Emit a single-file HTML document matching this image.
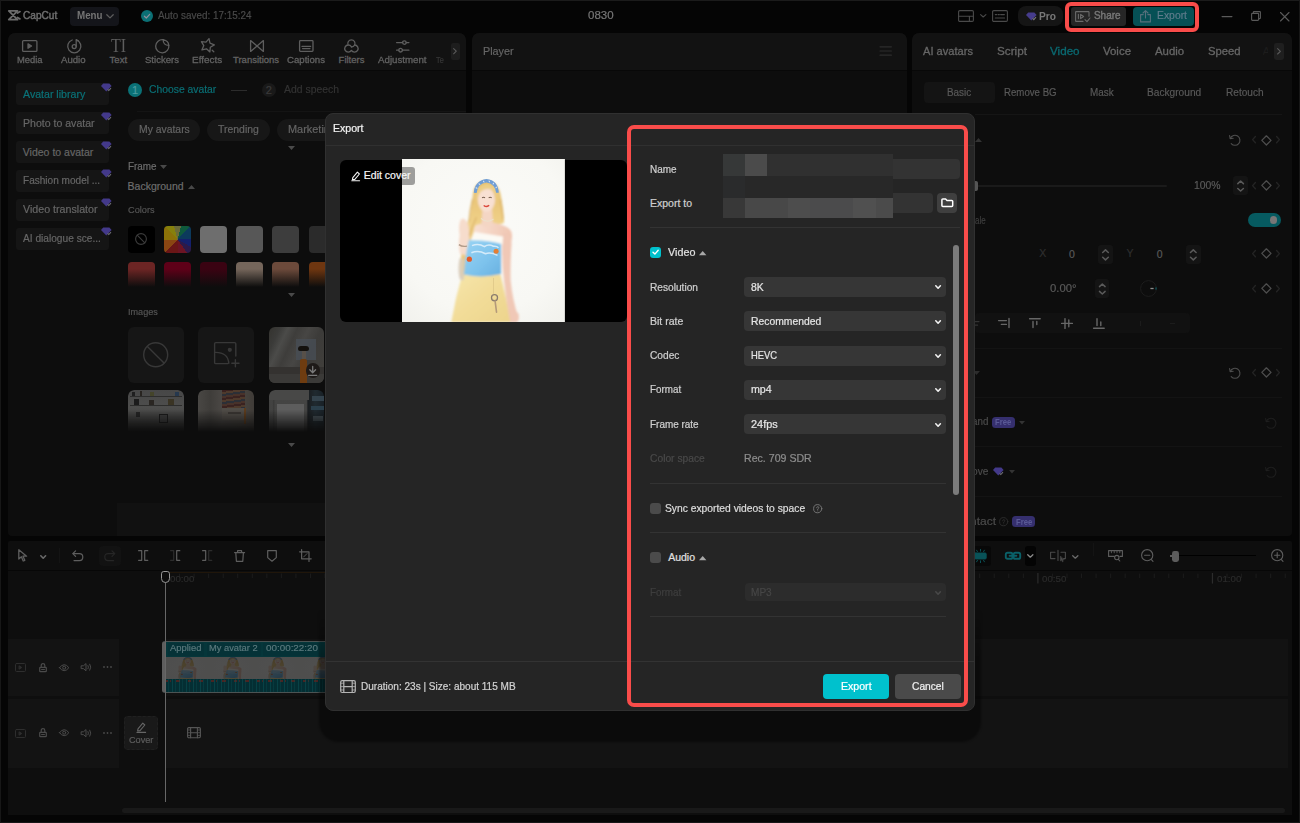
<!DOCTYPE html>
<html lang="en">
<head>
<meta charset="utf-8">
<title>CapCut - Export</title>
<style>
*{box-sizing:border-box;margin:0;padding:0}
html,body{width:1300px;height:823px;overflow:hidden;background:#050505}
body{font-family:"Liberation Sans",sans-serif;font-size:11px;color:#6b6b6b;position:relative}
section{position:absolute;left:0;top:0;width:0;height:0}
.b{position:absolute}
.t{position:absolute;white-space:nowrap;line-height:16px;height:16px;transform-origin:0 50%}
.i{position:absolute;overflow:visible}
.red{position:absolute;border:4px solid #f94c4a}

</style>
</head>
<body>
<!-- title -->
<section id="title">
<div class="b" style="left:0px;top:0px;width:1300px;height:823px;border:1px solid #171717;border-top-color:#1b1b1b;"></div>
<svg class="i" style="left:8px;top:10px;" width="12.5" height="10.5" viewBox="0 0 12.5 10.5" fill="none" stroke="#6c6c6c" stroke-width="1.8" stroke-linecap="round" stroke-linejoin="round"><path d="M0.8 0.8H9.5L0.8 9.7H9.5Z"/><path d="M9.5 3.1L12 1.6M9.5 7.4L12 8.9"/></svg>
<span class="t" style="left:22.8px;top:7px;font-size:10.5px;color:#6d6d6d;transform:scaleX(0.96);-webkit-text-stroke:0.5px #6d6d6d;">CapCut</span>
<div class="b" style="left:70px;top:6.5px;width:49px;height:19.5px;background:#14151a;border-radius:4px;"></div>
<span class="t" style="left:77px;top:8px;font-size:10px;color:#747474;font-weight:700;transform:scaleX(0.977);">Menu</span>
<svg class="i" style="left:105.5px;top:13.5px;" width="8" height="5" viewBox="0 0 8 5" fill="none" stroke="#5c5c5c" stroke-width="1.3" stroke-linecap="round" stroke-linejoin="round"><path d="M0.8 0.8L4 3.9L7.2 0.8"/></svg>
<svg class="i" style="left:141px;top:10px;" width="12" height="12" viewBox="0 0 12 12" fill="none"><circle cx="6" cy="6" r="6" fill="#0b6f74"/><path d="M3.4 6.2L5.3 8L8.7 4.3" stroke="#8f8f9a" stroke-width="1.2" fill="none" stroke-linecap="round" stroke-linejoin="round"/></svg>
<span class="t" style="left:157.5px;top:8px;font-size:10px;color:#4a4a4a;transform:scaleX(0.989);-webkit-text-stroke:0.18px #4a4a4a;">Auto saved: 17:15:24</span>
<span class="t" style="left:588px;top:7px;font-size:10.5px;color:#777777;transform:scaleX(1.096);-webkit-text-stroke:0.18px #777777;">0830</span>
<svg class="i" style="left:958px;top:10px;" width="16" height="12" viewBox="0 0 16 12" fill="none" stroke="#4a4a4a" stroke-width="1.1" stroke-linecap="round" stroke-linejoin="round"><rect x="0.6" y="0.6" width="14.8" height="10.8" rx="1.2"/><path d="M0.6 6.2H15.4M11.4 6.2V11.4"/></svg>
<svg class="i" style="left:980px;top:13.5px;" width="6.5" height="4" viewBox="0 0 6.5 4" fill="none" stroke="#4a4a4a" stroke-width="1.1" stroke-linecap="round" stroke-linejoin="round"><path d="M0.6 0.6L3.2 3L5.9 0.6"/></svg>
<svg class="i" style="left:992px;top:10px;" width="16" height="12" viewBox="0 0 16 12" fill="none" stroke="#4a4a4a" stroke-width="1.1" stroke-linecap="round" stroke-linejoin="round"><rect x="0.6" y="0.6" width="14.8" height="10.8" rx="1.2"/><path d="M3.3 4.6H4.6M6 4.6H7.4M8.6 4.6H12.4M3.3 8H12.6"/></svg>
<div class="b" style="left:1017.5px;top:6px;width:45px;height:20px;background:#151515;border-radius:8px;"></div>
<svg class="i" style="left:1025.5px;top:12px;" width="11" height="9" viewBox="0 0 11 9" fill="none"><path d="M2.2 0.4H8.4L10.6 3L5.3 8.4L0 3Z" fill="#463c8c"/><path d="M6.6 6.4L7.8 7.6L10 5.2" stroke="#777" stroke-width="1.1" fill="none"/></svg>
<span class="t" style="left:1038.5px;top:8px;font-size:10.5px;color:#787878;font-weight:700;transform:scaleX(0.971);">Pro</span>
<div class="b" style="left:1070.5px;top:7px;width:55px;height:18.5px;background:#262626;border-radius:3px;"></div>
<svg class="i" style="left:1075px;top:10.5px;" width="15.5" height="12" viewBox="0 0 15.5 12" fill="none" stroke="#6a6a6a" stroke-width="1.1" stroke-linecap="round" stroke-linejoin="round"><path d="M8 10.4H1.2Q0.6 10.4 0.6 9.8V1.2Q0.6 0.6 1.2 0.6H13.4Q14 0.6 14 1.2V5.2"/><path d="M5.6 3.4L8.6 5.5L5.6 7.6Z"/><path d="M3.4 3.4V7.6"/><path d="M10 8.6L12 10.6L15 7"/></svg>
<span class="t" style="left:1093.5px;top:8px;font-size:10px;color:#767676;transform:scaleX(0.993);-webkit-text-stroke:0.45px #767676;">Share</span>
<div class="b" style="left:1133px;top:6.5px;width:61px;height:19.5px;background:#065055;border-radius:4px;"></div>
<svg class="i" style="left:1140px;top:10px;" width="11" height="12.5" viewBox="0 0 11 12.5" fill="none" stroke="#56707c" stroke-width="1.1" stroke-linecap="round" stroke-linejoin="round"><path d="M3.2 4.6H0.6V11.9H10.4V4.6H7.8"/><path d="M5.5 8V0.8M3 3L5.5 0.6L8 3"/></svg>
<span class="t" style="left:1157px;top:7px;font-size:10.5px;color:#5f7c8c;transform:scaleX(0.988);-webkit-text-stroke:0.18px #5f7c8c;">Export</span>
<svg class="i" style="left:1222px;top:15.5px;" width="10" height="1.2" viewBox="0 0 10 1.2" fill="none" stroke="#5a5a5a" stroke-width="1.1" stroke-linecap="round" stroke-linejoin="round"><path d="M0 0.6H10"/></svg>
<svg class="i" style="left:1251px;top:11px;" width="10" height="10" viewBox="0 0 10 10" fill="none" stroke="#5a5a5a" stroke-width="1.1" stroke-linecap="round" stroke-linejoin="round"><rect x="0.6" y="2.4" width="7" height="7" rx="0.8"/><path d="M2.4 2.2V1.2Q2.4 0.6 3 0.6H8.8Q9.4 0.6 9.4 1.2V7Q9.4 7.6 8.8 7.6H7.8"/></svg>
<svg class="i" style="left:1280px;top:12px;" width="9.5" height="9.5" viewBox="0 0 9.5 9.5" fill="none" stroke="#5a5a5a" stroke-width="1.1" stroke-linecap="round" stroke-linejoin="round"><path d="M0.5 0.5L9 9M9 0.5L0.5 9"/></svg>
</section>
<!-- left -->
<section id="left">
<div class="b" style="left:8px;top:33px;width:458px;height:502.5px;background:#0d0d0d;border-radius:7px 7px 4px 4px;"></div>
<div class="b" style="left:8px;top:33px;width:458px;height:37px;background:#121212;border-radius:7px 7px 0 0;"></div>
<div class="b" style="left:8px;top:70px;width:458px;height:1px;background:#080808;"></div>
<div class="b" style="left:117px;top:503px;width:349px;height:32.5px;background:#111111;border-radius:0 0 4px 0;"></div>
<svg class="i" style="left:22px;top:40px;" width="15.5" height="12" viewBox="0 0 15.5 12" fill="none" stroke="#5e5e5e" stroke-width="1.3" stroke-linecap="round" stroke-linejoin="round"><rect x="0.6" y="0.6" width="14.3" height="10.8" rx="1"/><path d="M6 3.8L9.6 6L6 8.2Z" fill="#5e5e5e"/></svg>
<svg class="i" style="left:66.5px;top:38.8px;" width="14.5" height="14.5" viewBox="0 0 14.5 14.5" fill="none" stroke="#5e5e5e" stroke-width="1.3" stroke-linecap="round" stroke-linejoin="round"><path d="M9.4 1A6.6 6.6 0 1 1 5.2 1"/><circle cx="7.2" cy="7.6" r="2"/><path d="M9.2 7.6V0.7L11.4 1.8"/></svg>
<span class="t" style="left:110.8px;top:38px;font-size:18.5px;color:#5e5e5e;transform:scaleX(0.863);font-family:'Liberation Serif',serif;line-height:16px;">TI</span>
<svg class="i" style="left:155px;top:39px;" width="14.5" height="14.5" viewBox="0 0 14.5 14.5" fill="none" stroke="#5e5e5e" stroke-width="1.3" stroke-linecap="round" stroke-linejoin="round"><path d="M8.2 0.7A6.6 6.6 0 1 0 13.8 6.3"/><path d="M8.2 0.7Q8 6.2 13.8 6.3Q13.6 2 8.2 0.7Z"/></svg>
<svg class="i" style="left:199.5px;top:38.4px;" width="15" height="15" viewBox="0 0 15 15" fill="none" stroke="#5e5e5e" stroke-width="1.3" stroke-linecap="round" stroke-linejoin="round"><path d="M9.0 0.6L10.0 5.2L14.3 6.9L10.3 9.3L9.9 13.9L6.5 10.8L1.9 11.9L3.8 7.6L1.4 3.7L6.0 4.2Z"/><path d="M12.2 12.2L13.8 13.8"/></svg>
<svg class="i" style="left:249.5px;top:40px;" width="14" height="12" viewBox="0 0 14 12" fill="none" stroke="#5e5e5e" stroke-width="1.3" stroke-linecap="round" stroke-linejoin="round"><path d="M0.6 0.6V11.4L13.4 0.6V11.4Z"/></svg>
<svg class="i" style="left:298.8px;top:40px;" width="14.6" height="12" viewBox="0 0 14.6 12" fill="none" stroke="#5e5e5e" stroke-width="1.3" stroke-linecap="round" stroke-linejoin="round"><rect x="0.6" y="0.6" width="13.4" height="10.8" rx="0.8"/><path d="M3 6.4H11.6M3.6 8.6H11" stroke-width="1.3"/></svg>
<svg class="i" style="left:344px;top:38.6px;" width="15" height="14" viewBox="0 0 15 14" fill="none" stroke="#5e5e5e" stroke-width="1.3" stroke-linecap="round" stroke-linejoin="round"><path d="M4.17 6A3.6 3.6 0 1 1 10.63 6A3.6 3.6 0 1 1 7.4 11.43A3.6 3.6 0 1 1 4.17 6A3.6 3.6 0 0 1 7.4 7.77"/><path d="M10.63 6A3.6 3.6 0 0 1 7.4 8"/></svg>
<svg class="i" style="left:395.5px;top:38.5px;" width="13.5" height="14" viewBox="0 0 13.5 14" fill="none" stroke="#5e5e5e" stroke-width="1.3" stroke-linecap="round" stroke-linejoin="round"><path d="M0.6 3.6H6.6M10.2 3.6H12.9M0.6 11.2H2.8M6.4 11.2H12.9"/><circle cx="8.4" cy="3.6" r="1.8"/><circle cx="4.6" cy="11.2" r="1.8"/></svg>
<span class="t" style="left:17px;top:52px;font-size:9.5px;color:#626262;transform:scaleX(0.989);-webkit-text-stroke:0.3px #626262;">Media</span>
<span class="t" style="left:61.4px;top:52px;font-size:9.5px;color:#626262;transform:scaleX(1.012);-webkit-text-stroke:0.3px #626262;">Audio</span>
<span class="t" style="left:109.6px;top:52px;font-size:9.5px;color:#626262;-webkit-text-stroke:0.3px #626262;">Text</span>
<span class="t" style="left:145px;top:52px;font-size:9.5px;color:#626262;transform:scaleX(1.006);-webkit-text-stroke:0.3px #626262;">Stickers</span>
<span class="t" style="left:191.8px;top:52px;font-size:9.5px;color:#626262;transform:scaleX(1.046);-webkit-text-stroke:0.3px #626262;">Effects</span>
<span class="t" style="left:233px;top:52px;font-size:9.5px;color:#626262;-webkit-text-stroke:0.3px #626262;">Transitions</span>
<span class="t" style="left:287.4px;top:52px;font-size:9.5px;color:#626262;transform:scaleX(1.013);-webkit-text-stroke:0.3px #626262;">Captions</span>
<span class="t" style="left:338.6px;top:52px;font-size:9.5px;color:#626262;-webkit-text-stroke:0.3px #626262;">Filters</span>
<span class="t" style="left:377.8px;top:52px;font-size:9.5px;color:#626262;transform:scaleX(1.022);-webkit-text-stroke:0.3px #626262;">Adjustment</span>
<span class="t" style="left:435.8px;top:52px;font-size:9.5px;color:#383838;transform:scaleX(0.766);-webkit-text-stroke:0.18px #383838;">Te</span>
<div class="b" style="left:450.5px;top:43px;width:9.3px;height:16.8px;background:#1d1d1d;border-radius:2px;"></div>
<svg class="i" style="left:453.4px;top:48.4px;" width="4" height="6.4" viewBox="0 0 4 6.4" fill="none" stroke="#5a5a5a" stroke-width="1.1" stroke-linecap="round" stroke-linejoin="round"><path d="M0.6 0.6L3.3 3.2L0.6 5.8"/></svg>
<div class="b" style="left:15.7px;top:83.4px;width:93.6px;height:21.9px;background:#151515;border-radius:3px;"></div>
<span class="t" style="left:22.8px;top:86px;font-size:10.5px;color:#0a747a;transform:scaleX(1.009);-webkit-text-stroke:0.18px #0a747a;">Avatar library</span>
<svg class="i" style="left:100.6px;top:82.8px;" width="11" height="9" viewBox="0 0 11 9" fill="none"><path d="M2.2 0.4H8.4L10.6 3L5.3 8.4L0 3Z" fill="#43398a"/><path d="M6.6 6.3L7.8 7.5L10 5.1" stroke="#6d6d74" stroke-width="1.1" fill="none"/></svg>
<div class="b" style="left:15.7px;top:112.26px;width:93.6px;height:21.9px;background:#151515;border-radius:3px;"></div>
<span class="t" style="left:22.8px;top:115px;font-size:10.5px;color:#676767;transform:scaleX(1.005);-webkit-text-stroke:0.18px #676767;">Photo to avatar</span>
<svg class="i" style="left:100.6px;top:111.66px;" width="11" height="9" viewBox="0 0 11 9" fill="none"><path d="M2.2 0.4H8.4L10.6 3L5.3 8.4L0 3Z" fill="#43398a"/><path d="M6.6 6.3L7.8 7.5L10 5.1" stroke="#6d6d74" stroke-width="1.1" fill="none"/></svg>
<div class="b" style="left:15.7px;top:141.12px;width:93.6px;height:21.9px;background:#151515;border-radius:3px;"></div>
<span class="t" style="left:22.8px;top:144px;font-size:10.5px;color:#676767;-webkit-text-stroke:0.18px #676767;">Video to avatar</span>
<svg class="i" style="left:100.6px;top:140.52px;" width="11" height="9" viewBox="0 0 11 9" fill="none"><path d="M2.2 0.4H8.4L10.6 3L5.3 8.4L0 3Z" fill="#43398a"/><path d="M6.6 6.3L7.8 7.5L10 5.1" stroke="#6d6d74" stroke-width="1.1" fill="none"/></svg>
<div class="b" style="left:15.7px;top:169.98px;width:93.6px;height:21.9px;background:#151515;border-radius:3px;"></div>
<span class="t" style="left:22.8px;top:172px;font-size:10.5px;color:#676767;transform:scaleX(0.958);-webkit-text-stroke:0.18px #676767;">Fashion model ...</span>
<svg class="i" style="left:100.6px;top:169.38px;" width="11" height="9" viewBox="0 0 11 9" fill="none"><path d="M2.2 0.4H8.4L10.6 3L5.3 8.4L0 3Z" fill="#43398a"/><path d="M6.6 6.3L7.8 7.5L10 5.1" stroke="#6d6d74" stroke-width="1.1" fill="none"/></svg>
<div class="b" style="left:15.7px;top:198.84px;width:93.6px;height:21.9px;background:#151515;border-radius:3px;"></div>
<span class="t" style="left:22.8px;top:201px;font-size:10.5px;color:#676767;transform:scaleX(1.016);-webkit-text-stroke:0.18px #676767;">Video translator</span>
<svg class="i" style="left:100.6px;top:198.24px;" width="11" height="9" viewBox="0 0 11 9" fill="none"><path d="M2.2 0.4H8.4L10.6 3L5.3 8.4L0 3Z" fill="#43398a"/><path d="M6.6 6.3L7.8 7.5L10 5.1" stroke="#6d6d74" stroke-width="1.1" fill="none"/></svg>
<div class="b" style="left:15.7px;top:227.7px;width:93.6px;height:21.9px;background:#151515;border-radius:3px;"></div>
<span class="t" style="left:22.8px;top:230px;font-size:10.5px;color:#676767;transform:scaleX(0.967);-webkit-text-stroke:0.18px #676767;">AI dialogue sce...</span>
<svg class="i" style="left:100.6px;top:227.1px;" width="11" height="9" viewBox="0 0 11 9" fill="none"><path d="M2.2 0.4H8.4L10.6 3L5.3 8.4L0 3Z" fill="#43398a"/><path d="M6.6 6.3L7.8 7.5L10 5.1" stroke="#6d6d74" stroke-width="1.1" fill="none"/></svg>
<div class="b" style="left:127.6px;top:82.8px;width:14.6px;height:14.7px;background:#0a7176;border-radius:8px;"></div>
<span class="t" style="left:132px;top:82px;font-size:11px;color:#4c9a9e;-webkit-text-stroke:0.18px #4c9a9e;">1</span>
<span class="t" style="left:149.3px;top:81px;font-size:10.5px;color:#0a7076;transform:scaleX(0.985);-webkit-text-stroke:0.18px #0a7076;">Choose avatar</span>
<div class="b" style="left:231.4px;top:89.6px;width:15.8px;height:1px;background:#2c2c2c;"></div>
<div class="b" style="left:261.6px;top:83px;width:14.4px;height:14.3px;background:#191919;border-radius:8px;"></div>
<span class="t" style="left:265.8px;top:82px;font-size:11px;color:#3a3a3a;-webkit-text-stroke:0.18px #3a3a3a;">2</span>
<span class="t" style="left:283.8px;top:81px;font-size:10.5px;color:#333333;transform:scaleX(0.992);-webkit-text-stroke:0.18px #333333;">Add speech</span>
<div class="b" style="left:137px;top:111px;width:329px;height:1px;background:#141414;"></div>
<div class="b" style="left:127.6px;top:118.5px;width:72.8px;height:22.7px;background:#171717;border-radius:11.4px;"></div>
<span class="t" style="left:138.6px;top:121px;font-size:10.5px;color:#656565;transform:scaleX(0.989);-webkit-text-stroke:0.18px #656565;">My avatars</span>
<div class="b" style="left:207px;top:118.5px;width:63.2px;height:22.7px;background:#171717;border-radius:11.4px;"></div>
<span class="t" style="left:218.4px;top:121px;font-size:10.5px;color:#656565;transform:scaleX(0.994);-webkit-text-stroke:0.18px #656565;">Trending</span>
<div class="b" style="left:277.2px;top:118.5px;width:67.8px;height:22.7px;background:#171717;border-radius:11.4px;"></div>
<span class="t" style="left:288px;top:121px;font-size:10.5px;color:#656565;transform:scaleX(1.041);-webkit-text-stroke:0.18px #656565;">Marketing</span>
<svg class="i" style="left:287.7px;top:145.6px;" width="7" height="4" viewBox="0 0 7 4" fill="none"><polygon points="0,0 7,0 3.5,4" fill="#4a4a4a"/></svg>
<span class="t" style="left:127.6px;top:158px;font-size:10.5px;color:#6e6e6e;transform:scaleX(0.943);-webkit-text-stroke:0.18px #6e6e6e;">Frame</span>
<svg class="i" style="left:160.1px;top:165.4px;" width="7" height="4" viewBox="0 0 7 4" fill="none"><polygon points="0,0 7,0 3.5,4" fill="#484848"/></svg>
<span class="t" style="left:127.6px;top:178px;font-size:10.5px;color:#6e6e6e;-webkit-text-stroke:0.18px #6e6e6e;">Background</span>
<svg class="i" style="left:187.7px;top:184.6px;" width="7" height="4" viewBox="0 0 7 4" fill="none"><polygon points="0,4 3.5,0 7,4" fill="#484848"/></svg>
<span class="t" style="left:127.6px;top:202px;font-size:9.5px;color:#555555;transform:scaleX(0.969);-webkit-text-stroke:0.18px #555555;">Colors</span>
<div class="b" style="left:127.8px;top:225.5px;width:27px;height:27.1px;background:#000000;border-radius:4px;"></div>
<div class="b" style="left:163.95px;top:225.5px;width:27px;height:27.1px;border-radius:4px;background:conic-gradient(from 0deg,#6b6b3a 0 4%,#0f5a3c 4% 12%,#0c3a5c 12% 25%,#14206c 25% 33%,#2c1a4a 33% 40%,#6c1424 40% 50%,#6a1616 50% 62%,#8a4612 62% 75%,#8c7208 75% 88%,#86800c 88% 96%,#6b6b3a 96%);"></div>
<div class="b" style="left:200.1px;top:225.5px;width:27px;height:27.1px;background:#6e6e6e;border-radius:4px;"></div>
<div class="b" style="left:236.25px;top:225.5px;width:27px;height:27.1px;background:#575757;border-radius:4px;"></div>
<div class="b" style="left:272.4px;top:225.5px;width:27px;height:27.1px;background:#3d3d3d;border-radius:4px;"></div>
<div class="b" style="left:308.55px;top:225.5px;width:27px;height:27.1px;background:#2b2b2b;border-radius:4px;"></div>
<svg class="i" style="left:135.4px;top:233px;" width="12" height="12" viewBox="0 0 12 12" fill="none" stroke="#3c3c3c" stroke-width="1.1" stroke-linecap="round" stroke-linejoin="round"><circle cx="6" cy="6" r="5.4"/><path d="M2.2 2.2L9.8 9.8"/></svg>
<div class="b" style="left:127.8px;top:261.8px;width:27px;height:25.2px;border-radius:4px 4px 0 0;background:linear-gradient(to bottom,#6c2524 0,#6c2524 28%,rgba(13,13,13,0) 100%);"></div>
<div class="b" style="left:163.95px;top:261.8px;width:27px;height:25.2px;border-radius:4px 4px 0 0;background:linear-gradient(to bottom,#5e0018 0,#5e0018 28%,rgba(13,13,13,0) 100%);"></div>
<div class="b" style="left:200.1px;top:261.8px;width:27px;height:25.2px;border-radius:4px 4px 0 0;background:linear-gradient(to bottom,#3a0312 0,#3a0312 28%,rgba(13,13,13,0) 100%);"></div>
<div class="b" style="left:236.25px;top:261.8px;width:27px;height:25.2px;border-radius:4px 4px 0 0;background:linear-gradient(to bottom,#75665b 0,#75665b 28%,rgba(13,13,13,0) 100%);"></div>
<div class="b" style="left:272.4px;top:261.8px;width:27px;height:25.2px;border-radius:4px 4px 0 0;background:linear-gradient(to bottom,#6c4a3b 0,#6c4a3b 28%,rgba(13,13,13,0) 100%);"></div>
<div class="b" style="left:308.55px;top:261.8px;width:27px;height:25.2px;border-radius:4px 4px 0 0;background:linear-gradient(to bottom,#6e3610 0,#6e3610 28%,rgba(13,13,13,0) 100%);"></div>
<svg class="i" style="left:287.7px;top:292.8px;" width="7" height="4" viewBox="0 0 7 4" fill="none"><polygon points="0,0 7,0 3.5,4" fill="#4a4a4a"/></svg>
<span class="t" style="left:127.6px;top:304px;font-size:9.5px;color:#555555;transform:scaleX(0.956);-webkit-text-stroke:0.18px #555555;">Images</span>
<div class="b" style="left:127.7px;top:326.8px;width:56.1px;height:55.8px;background:#161616;border-radius:6px;"></div>
<svg class="i" style="left:143px;top:342px;" width="25.4" height="25.4" viewBox="0 0 25.4 25.4" fill="none" stroke="#383838" stroke-width="1.4" stroke-linecap="round" stroke-linejoin="round"><circle cx="12.7" cy="12.7" r="12"/><path d="M4.4 4.4L21 21"/></svg>
<div class="b" style="left:198px;top:326.8px;width:56.4px;height:55.8px;background:#161616;border-radius:6px;"></div>
<svg class="i" style="left:214.4px;top:342.4px;" width="25" height="25" viewBox="0 0 25 25" fill="none" stroke="#383838" stroke-width="1.4" stroke-linecap="round" stroke-linejoin="round"><path d="M21.8 14V1.8Q21.8 0.6 20.6 0.6H1.8Q0.6 0.6 0.6 1.8V20.4Q0.6 21.6 1.8 21.6H14"/><path d="M0.6 10.4Q14 10 14.8 21.4"/><circle cx="15.8" cy="7.8" r="1.4" fill="#383838"/><path d="M21.4 17.6V24.8M17.8 21.2H25"/></svg>
<div class="b" style="left:268.5px;top:326.6px;width:55.8px;height:56.1px;border-radius:6px;filter:blur(.3px);background:linear-gradient(115deg,#34332f 0,#3b3b39 14%,#4b4b49 24%,#3e3d3b 36%,#474644 50%,#3c3b39 66%,#42403c 100%);overflow:hidden;"><div class="b" style="left:27px;top:12px;width:20px;height:21px;background:#474d55;opacity:.8"></div><div class="b" style="left:0;top:40px;width:56px;height:7px;background:#343230"></div><div class="b" style="left:0;top:47px;width:56px;height:10px;background:#3b3a38"></div><div class="b" style="left:31.6px;top:32px;width:7.4px;height:24px;background:#6e3c10;border-radius:2px 2px 0 0"></div><div class="b" style="left:33.4px;top:24px;width:4px;height:8px;background:#575049"></div><div class="b" style="left:29.6px;top:19.4px;width:11.4px;height:5.4px;background:#14110d;border-radius:3px 3px 2px 2px"></div><div class="b" style="left:37px;top:36.6px;width:14.8px;height:14.8px;border-radius:8px;background:#1e1a18"></div></div>
<svg class="i" style="left:308.2px;top:365.8px;" width="9.4" height="10" viewBox="0 0 9.4 10" fill="none" stroke="#7a7a7a" stroke-width="1.3" stroke-linecap="round" stroke-linejoin="round"><path d="M4.7 0.5V6.4M1.8 3.8L4.7 6.8L7.6 3.8M0.6 9.3H8.8"/></svg>
<div class="b" style="left:127.7px;top:389.8px;width:56.1px;height:44.2px;filter:blur(.3px);border-radius:6px 6px 0 0;overflow:hidden;-webkit-mask-image:linear-gradient(to bottom,#000 0,#000 45%,transparent 96%);mask-image:linear-gradient(to bottom,#000 0,#000 45%,transparent 96%);background:linear-gradient(to bottom,#474747 0,#4e4e4d 40%,#3b3b3a 75%,#2c2c2b 100%);"><div class="b" style="left:2px;top:6px;width:52px;height:1px;background:#2d2d2c"></div><div class="b" style="left:2px;top:15px;width:52px;height:1px;background:#2d2d2c"></div><div class="b" style="left:4px;top:2px;width:3px;height:4px;background:#1f1f1f"></div><div class="b" style="left:12px;top:1px;width:2px;height:5px;background:#282420"></div><div class="b" style="left:22px;top:2px;width:4px;height:4px;background:#44442a"></div><div class="b" style="left:47px;top:2px;width:4px;height:4px;background:#26384e"></div><div class="b" style="left:6px;top:9px;width:5px;height:6px;background:#1c1c1c"></div><div class="b" style="left:21px;top:10px;width:5px;height:5px;background:#2a2622"></div><div class="b" style="left:40px;top:9px;width:6px;height:6px;background:#3a3424"></div><div class="b" style="left:31px;top:24px;width:9px;height:9px;border:1px solid #1a1a1a;background:#3c3c3c"></div><div class="b" style="left:8px;top:22px;width:4px;height:5px;background:#242424"></div></div>
<div class="b" style="left:198px;top:389.8px;width:56.4px;height:44.2px;filter:blur(.3px);border-radius:6px 6px 0 0;overflow:hidden;-webkit-mask-image:linear-gradient(to bottom,#000 0,#000 45%,transparent 96%);mask-image:linear-gradient(to bottom,#000 0,#000 45%,transparent 96%);background:linear-gradient(90deg,#494744 0,#3f3d3a 22%,#4a4744 42%,#48443f 78%,#403c38 100%);"><div class="b" style="left:23.6px;top:0;width:23px;height:18px;background:repeating-linear-gradient(172deg,#3a2220 0 2px,#4e3a2c 2px 4px,#2c2f36 4px 6px,#48322a 6px 8px)"></div><div class="b" style="left:24px;top:18px;width:24px;height:12px;background:#504c47"></div><div class="b" style="left:30px;top:22.4px;width:13px;height:2px;background:#3a3632"></div><div class="b" style="left:46px;top:18px;width:1.6px;height:16px;background:#5e3c1c"></div></div>
<div class="b" style="left:268.5px;top:389.8px;width:55.8px;height:44.2px;filter:blur(.3px);border-radius:6px 6px 0 0;overflow:hidden;-webkit-mask-image:linear-gradient(to bottom,#000 0,#000 45%,transparent 96%);mask-image:linear-gradient(to bottom,#000 0,#000 45%,transparent 96%);background:linear-gradient(90deg,#414140 0,#434342 6%,#3a3a39 8%,#444443 12%,#454544 68%,#1a1d20 71%,#202a30 84%,#182026 100%);"><div class="b" style="left:0;top:0;width:40px;height:10px;background:#484847"></div><div class="b" style="left:8.2px;top:14px;width:27.8px;height:31px;background:#5d5d5d"></div><div class="b" style="left:43px;top:6px;width:13px;height:5px;background:#33424c"></div><div class="b" style="left:42px;top:16px;width:14px;height:4px;background:#2a3e4a"></div><div class="b" style="left:44px;top:26px;width:10px;height:5px;background:#404a50"></div></div>
<svg class="i" style="left:287.7px;top:443.2px;" width="7" height="4" viewBox="0 0 7 4" fill="none"><polygon points="0,0 7,0 3.5,4" fill="#4a4a4a"/></svg>
</section>
<!-- mid -->
<section id="mid">
<div class="b" style="left:472px;top:33px;width:434.6px;height:502.5px;background:#0d0d0d;border-radius:7px 7px 4px 4px;"></div>
<div class="b" style="left:472px;top:33px;width:434.6px;height:37px;background:#121212;border-radius:7px 7px 0 0;"></div>
<div class="b" style="left:472px;top:70px;width:434.6px;height:1px;background:#080808;"></div>
<span class="t" style="left:483px;top:43px;font-size:10.5px;color:#666666;transform:scaleX(1.028);-webkit-text-stroke:0.18px #666666;">Player</span>
<svg class="i" style="left:880px;top:46px;" width="11.4" height="10" viewBox="0 0 11.4 10" fill="none" stroke="#2c2c2c" stroke-width="1.2" stroke-linecap="round" stroke-linejoin="round"><path d="M0 0.8H11.4M0 5H11.4M0 9.2H11.4"/></svg>
</section>
<!-- right -->
<section id="right">
<div class="b" style="left:912.4px;top:33px;width:380px;height:502.5px;background:#0d0d0d;border-radius:7px 7px 4px 4px;"></div>
<div class="b" style="left:912.4px;top:33px;width:380px;height:37px;background:#121212;border-radius:7px 7px 0 0;"></div>
<div class="b" style="left:912.4px;top:70px;width:380px;height:1px;background:#080808;"></div>
<span class="t" style="left:923px;top:43px;font-size:11.5px;color:#676767;transform:scaleX(0.966);-webkit-text-stroke:0.3px #676767;">AI avatars</span>
<span class="t" style="left:996.6px;top:43px;font-size:11.5px;color:#676767;transform:scaleX(1.02);-webkit-text-stroke:0.3px #676767;">Script</span>
<span class="t" style="left:1050px;top:43px;font-size:11.5px;color:#0a6a72;transform:scaleX(1.013);-webkit-text-stroke:0.3px #0a6a72;">Video</span>
<span class="t" style="left:1103px;top:43px;font-size:11.5px;color:#676767;transform:scaleX(0.995);-webkit-text-stroke:0.3px #676767;">Voice</span>
<span class="t" style="left:1154.8px;top:43px;font-size:11.5px;color:#676767;transform:scaleX(0.992);-webkit-text-stroke:0.3px #676767;">Audio</span>
<span class="t" style="left:1208px;top:43px;font-size:11.5px;color:#676767;transform:scaleX(0.98);-webkit-text-stroke:0.3px #676767;">Speed</span>
<span class="t" style="left:1262.6px;top:43px;font-size:11.5px;color:#1c1c1c;-webkit-text-stroke:0.18px #1c1c1c;width:5px;overflow:hidden;">A</span>
<div class="b" style="left:1274.4px;top:43px;width:9.4px;height:16.8px;background:#1f1f1f;border-radius:2.4px;"></div>
<svg class="i" style="left:1277.3px;top:48.2px;" width="4" height="6.6" viewBox="0 0 4 6.6" fill="none" stroke="#5a5a5a" stroke-width="1.1" stroke-linecap="round" stroke-linejoin="round"><path d="M0.6 0.6L3.4 3.3L0.6 6"/></svg>
<div class="b" style="left:923.8px;top:82.2px;width:71.4px;height:21.2px;background:#141414;border-radius:4px;"></div>
<span class="t" style="left:947px;top:85px;font-size:10px;color:#595959;transform:scaleX(0.99);-webkit-text-stroke:0.18px #595959;">Basic</span>
<span class="t" style="left:1004.4px;top:85px;font-size:10px;color:#595959;transform:scaleX(0.966);-webkit-text-stroke:0.18px #595959;">Remove BG</span>
<span class="t" style="left:1090.4px;top:85px;font-size:10px;color:#595959;transform:scaleX(0.987);-webkit-text-stroke:0.18px #595959;">Mask</span>
<span class="t" style="left:1146.6px;top:85px;font-size:10px;color:#595959;transform:scaleX(1.015);-webkit-text-stroke:0.18px #595959;">Background</span>
<span class="t" style="left:1226.4px;top:85px;font-size:10px;color:#595959;transform:scaleX(1.009);-webkit-text-stroke:0.18px #595959;">Retouch</span>
<div class="b" style="left:975px;top:114px;width:307px;height:1px;background:#151515;"></div>
<svg class="i" style="left:974.5px;top:137.6px;" width="7" height="4" viewBox="0 0 7 4" fill="none"><polygon points="0,4 3.5,0 7,4" fill="#333333"/></svg>
<svg class="i" style="left:1229.2px;top:134.1px;" width="11.4" height="11.6" viewBox="0 0 11.4 11.6" fill="none" stroke="#4e4e4e" stroke-width="1.1" stroke-linecap="round" stroke-linejoin="round"><path d="M2.2 9.6A5 5 0 1 0 1.4 4.2"/><path d="M0.6 1.6L1.2 4.6L4.2 4.2"/></svg>
<svg class="i" style="left:1252.4px;top:136.3px;" width="4" height="7.2" viewBox="0 0 4 7.2" fill="none" stroke="#242424" stroke-width="1.4" stroke-linecap="round" stroke-linejoin="round"><path d="M3.4 0.5L0.6 3.6L3.4 6.7"/></svg><svg class="i" style="left:1260.6px;top:134.5px;" width="10.8" height="10.8" viewBox="0 0 10.8 10.8" fill="none" stroke="#4e4e4e" stroke-width="1.25" stroke-linecap="round" stroke-linejoin="round"><path d="M5.4 0.8L10 5.4L5.4 10L0.8 5.4Z"/></svg><svg class="i" style="left:1275.6px;top:136.3px;" width="4" height="7.2" viewBox="0 0 4 7.2" fill="none" stroke="#242424" stroke-width="1.4" stroke-linecap="round" stroke-linejoin="round"><path d="M0.6 0.5L3.4 3.6L0.6 6.7"/></svg>
<div class="b" style="left:975px;top:184.6px;width:192.4px;height:2px;background:#1a1a1a;border-radius:1px;"></div>
<div class="b" style="left:972px;top:180.6px;width:6.4px;height:10.8px;background:#555555;border-radius:2px;"></div>
<span class="t" style="left:1194.4px;top:178px;font-size:10px;color:#5a5a5a;transform:scaleX(1.04);-webkit-text-stroke:0.18px #5a5a5a;">100%</span>
<div class="b" style="left:1233.2px;top:175.7px;width:15.2px;height:19.7px;background:#141414;border-radius:3px;"></div><svg class="i" style="left:1233.2px;top:175.7px;" width="15.2" height="19.7" viewBox="0 0 15.2 19.7" fill="none" stroke="#5a5a5a" stroke-width="1.5" stroke-linecap="round" stroke-linejoin="round"><path d="M4.8 7.65L7.6 5.05L10.4 7.65M4.8 12.45L7.6 15.05L10.4 12.45"/></svg>
<svg class="i" style="left:1252.4px;top:182px;" width="4" height="7.2" viewBox="0 0 4 7.2" fill="none" stroke="#242424" stroke-width="1.4" stroke-linecap="round" stroke-linejoin="round"><path d="M3.4 0.5L0.6 3.6L3.4 6.7"/></svg><svg class="i" style="left:1260.6px;top:180.2px;" width="10.8" height="10.8" viewBox="0 0 10.8 10.8" fill="none" stroke="#4e4e4e" stroke-width="1.25" stroke-linecap="round" stroke-linejoin="round"><path d="M5.4 0.8L10 5.4L5.4 10L0.8 5.4Z"/></svg><svg class="i" style="left:1275.6px;top:182px;" width="4" height="7.2" viewBox="0 0 4 7.2" fill="none" stroke="#242424" stroke-width="1.4" stroke-linecap="round" stroke-linejoin="round"><path d="M0.6 0.5L3.4 3.6L0.6 6.7"/></svg>
<span class="t" style="left:975px;top:212px;font-size:10.5px;color:#3e3e3e;transform:scaleX(0.756);-webkit-text-stroke:0.18px #3e3e3e;">ale</span>
<div class="b" style="left:1248.4px;top:212.8px;width:33px;height:14.6px;background:#065a60;border-radius:8px;"></div>
<div class="b" style="left:1270px;top:216.4px;width:7.4px;height:7.4px;background:#777777;border-radius:4px;"></div>
<span class="t" style="left:1039.2px;top:245px;font-size:10.5px;color:#2f2f2f;-webkit-text-stroke:0.18px #2f2f2f;">X</span>
<span class="t" style="left:1069px;top:246px;font-size:10.5px;color:#595959;-webkit-text-stroke:0.18px #595959;">0</span>
<div class="b" style="left:1098px;top:244.9px;width:15px;height:19.3px;background:#141414;border-radius:3px;"></div><svg class="i" style="left:1098px;top:244.9px;" width="15" height="19.3" viewBox="0 0 15 19.3" fill="none" stroke="#5a5a5a" stroke-width="1.5" stroke-linecap="round" stroke-linejoin="round"><path d="M4.7 7.45L7.5 4.85L10.3 7.45M4.7 12.25L7.5 14.85L10.3 12.25"/></svg>
<span class="t" style="left:1126.6px;top:245px;font-size:10.5px;color:#2f2f2f;-webkit-text-stroke:0.18px #2f2f2f;">Y</span>
<span class="t" style="left:1156.8px;top:246px;font-size:10.5px;color:#595959;-webkit-text-stroke:0.18px #595959;">0</span>
<div class="b" style="left:1186.2px;top:244.9px;width:14.6px;height:19.3px;background:#141414;border-radius:3px;"></div><svg class="i" style="left:1186.2px;top:244.9px;" width="14.6" height="19.3" viewBox="0 0 14.6 19.3" fill="none" stroke="#5a5a5a" stroke-width="1.5" stroke-linecap="round" stroke-linejoin="round"><path d="M4.5 7.45L7.3 4.85L10.1 7.45M4.5 12.25L7.3 14.85L10.1 12.25"/></svg>
<svg class="i" style="left:1252.4px;top:250.1px;" width="4" height="7.2" viewBox="0 0 4 7.2" fill="none" stroke="#242424" stroke-width="1.4" stroke-linecap="round" stroke-linejoin="round"><path d="M3.4 0.5L0.6 3.6L3.4 6.7"/></svg><svg class="i" style="left:1260.6px;top:248.3px;" width="10.8" height="10.8" viewBox="0 0 10.8 10.8" fill="none" stroke="#4e4e4e" stroke-width="1.25" stroke-linecap="round" stroke-linejoin="round"><path d="M5.4 0.8L10 5.4L5.4 10L0.8 5.4Z"/></svg><svg class="i" style="left:1275.6px;top:250.1px;" width="4" height="7.2" viewBox="0 0 4 7.2" fill="none" stroke="#242424" stroke-width="1.4" stroke-linecap="round" stroke-linejoin="round"><path d="M0.6 0.5L3.4 3.6L0.6 6.7"/></svg>
<span class="t" style="left:1049.8px;top:280px;font-size:10.5px;color:#595959;transform:scaleX(1.08);-webkit-text-stroke:0.18px #595959;">0.00°</span>
<div class="b" style="left:1094.6px;top:278.9px;width:14.6px;height:19.6px;background:#141414;border-radius:3px;"></div><svg class="i" style="left:1094.6px;top:278.9px;" width="14.6" height="19.6" viewBox="0 0 14.6 19.6" fill="none" stroke="#5a5a5a" stroke-width="1.5" stroke-linecap="round" stroke-linejoin="round"><path d="M4.5 7.6L7.3 5L10.1 7.6M4.5 12.4L7.3 15L10.1 12.4"/></svg>
<svg class="i" style="left:1139.8px;top:280px;" width="17" height="17" viewBox="0 0 17 17" fill="none"><circle cx="8.5" cy="8.5" r="7.9" stroke="#1c1c1c" fill="#0d0d0d"/><path d="M10.4 8.5H13.6" stroke="#8a8a8a" stroke-width="1.3"/><path d="M16 7.4V9.6" stroke="#0a6a72" stroke-width="1"/></svg>
<svg class="i" style="left:1252.4px;top:284.8px;" width="4" height="7.2" viewBox="0 0 4 7.2" fill="none" stroke="#242424" stroke-width="1.4" stroke-linecap="round" stroke-linejoin="round"><path d="M3.4 0.5L0.6 3.6L3.4 6.7"/></svg><svg class="i" style="left:1260.6px;top:283px;" width="10.8" height="10.8" viewBox="0 0 10.8 10.8" fill="none" stroke="#4e4e4e" stroke-width="1.25" stroke-linecap="round" stroke-linejoin="round"><path d="M5.4 0.8L10 5.4L5.4 10L0.8 5.4Z"/></svg><svg class="i" style="left:1275.6px;top:284.8px;" width="4" height="7.2" viewBox="0 0 4 7.2" fill="none" stroke="#242424" stroke-width="1.4" stroke-linecap="round" stroke-linejoin="round"><path d="M0.6 0.5L3.4 3.6L0.6 6.7"/></svg>
<div class="b" style="left:975px;top:313px;width:214.6px;height:19.8px;background:#111111;border-radius:4px;"></div>
<svg class="i" style="left:975px;top:318.6px;" width="6" height="9" viewBox="0 0 6 9" fill="none" stroke="#333" stroke-width="1.2" stroke-linecap="round" stroke-linejoin="round"><path d="M0 2.6H4M0 6.2H2.6"/></svg>
<svg class="i" style="left:998px;top:318.4px;" width="12" height="10" viewBox="0 0 12 10" fill="none" stroke="#676767" stroke-width="1.4" stroke-linecap="round" stroke-linejoin="round"><path d="M0.6 2.6H8.4M3.4 6.4H8.4M11 0.4V9.6"/></svg>
<svg class="i" style="left:1029px;top:318.4px;" width="12" height="10" viewBox="0 0 12 10" fill="none" stroke="#676767" stroke-width="1.4" stroke-linecap="round" stroke-linejoin="round"><path d="M0.6 0.8H11.2M4 3.4V9.6M7.8 3.4V6.6"/></svg>
<svg class="i" style="left:1060.6px;top:318px;" width="12" height="11" viewBox="0 0 12 11" fill="none" stroke="#676767" stroke-width="1.4" stroke-linecap="round" stroke-linejoin="round"><path d="M0.6 5.4H11.4M4 0.6V10.4M7.8 2V8.8"/></svg>
<svg class="i" style="left:1093px;top:318px;" width="12" height="11" viewBox="0 0 12 11" fill="none" stroke="#676767" stroke-width="1.4" stroke-linecap="round" stroke-linejoin="round"><path d="M0.6 10.2H11.2M4 0.8V7.6M7.8 4V7.6"/></svg>
<div class="b" style="left:1140px;top:321px;width:1px;height:5px;background:#1c1c1c;"></div>
<div class="b" style="left:1170px;top:323px;width:5px;height:1px;background:#1c1c1c;"></div>
<div class="b" style="left:975px;top:347.5px;width:307px;height:1px;background:#131313;"></div>
<div class="b" style="left:975px;top:396.7px;width:307px;height:1px;background:#131313;"></div>
<div class="b" style="left:975px;top:445.6px;width:307px;height:1px;background:#131313;"></div>
<div class="b" style="left:975px;top:495.6px;width:307px;height:1px;background:#131313;"></div>
<svg class="i" style="left:972.5px;top:370.6px;" width="7" height="4" viewBox="0 0 7 4" fill="none"><polygon points="0,0 7,0 3.5,4" fill="#2c2c2c"/></svg>
<svg class="i" style="left:1229.2px;top:366.9px;" width="11.4" height="11.6" viewBox="0 0 11.4 11.6" fill="none" stroke="#4e4e4e" stroke-width="1.1" stroke-linecap="round" stroke-linejoin="round"><path d="M2.2 9.6A5 5 0 1 0 1.4 4.2"/><path d="M0.6 1.6L1.2 4.6L4.2 4.2"/></svg>
<svg class="i" style="left:1252.4px;top:369.1px;" width="4" height="7.2" viewBox="0 0 4 7.2" fill="none" stroke="#242424" stroke-width="1.4" stroke-linecap="round" stroke-linejoin="round"><path d="M3.4 0.5L0.6 3.6L3.4 6.7"/></svg><svg class="i" style="left:1260.6px;top:367.3px;" width="10.8" height="10.8" viewBox="0 0 10.8 10.8" fill="none" stroke="#4e4e4e" stroke-width="1.25" stroke-linecap="round" stroke-linejoin="round"><path d="M5.4 0.8L10 5.4L5.4 10L0.8 5.4Z"/></svg><svg class="i" style="left:1275.6px;top:369.1px;" width="4" height="7.2" viewBox="0 0 4 7.2" fill="none" stroke="#242424" stroke-width="1.4" stroke-linecap="round" stroke-linejoin="round"><path d="M0.6 0.5L3.4 3.6L0.6 6.7"/></svg>
<span class="t" style="left:972px;top:413px;font-size:10.5px;color:#4c4c4c;transform:scaleX(0.935);-webkit-text-stroke:0.18px #4c4c4c;">and</span>
<div class="b" style="left:992px;top:416.8px;width:22.8px;height:11px;background:#352f6e;border-radius:3.5px;"></div><span class="t" style="left:995.4px;top:414px;font-size:8.5px;color:#5a5a96;font-weight:700;transform:scaleX(0.902);">Free</span>
<svg class="i" style="left:1018.6px;top:420.8px;" width="6" height="3.6" viewBox="0 0 6 3.6" fill="none"><polygon points="0,0 6,0 3,3.6" fill="#333333"/></svg>
<svg class="i" style="left:1265.2px;top:416.8px;" width="11.4" height="11.6" viewBox="0 0 11.4 11.6" fill="none" stroke="#1e1e1e" stroke-width="1.1" stroke-linecap="round" stroke-linejoin="round"><path d="M2.2 9.6A5 5 0 1 0 1.4 4.2"/><path d="M0.6 1.6L1.2 4.6L4.2 4.2"/></svg>
<span class="t" style="left:972px;top:463px;font-size:10.5px;color:#4c4c4c;transform:scaleX(0.968);-webkit-text-stroke:0.18px #4c4c4c;">ove</span>
<svg class="i" style="left:993.4px;top:467.4px;" width="11" height="9" viewBox="0 0 11 9" fill="none"><path d="M2.2 0.4H8.4L10.6 3L5.3 8.4L0 3Z" fill="#43398a"/><path d="M6.6 6.3L7.8 7.5L10 5.1" stroke="#6d6d74" stroke-width="1.1" fill="none"/></svg>
<svg class="i" style="left:1009px;top:470.2px;" width="6" height="3.6" viewBox="0 0 6 3.6" fill="none"><polygon points="0,0 6,0 3,3.6" fill="#333333"/></svg>
<svg class="i" style="left:1265.2px;top:466.2px;" width="11.4" height="11.6" viewBox="0 0 11.4 11.6" fill="none" stroke="#1e1e1e" stroke-width="1.1" stroke-linecap="round" stroke-linejoin="round"><path d="M2.2 9.6A5 5 0 1 0 1.4 4.2"/><path d="M0.6 1.6L1.2 4.6L4.2 4.2"/></svg>
<span class="t" style="left:970px;top:513px;font-size:10.5px;color:#4c4c4c;transform:scaleX(1.142);-webkit-text-stroke:0.18px #4c4c4c;">ntact</span>
<svg class="i" style="left:999.4px;top:517.2px;" width="9.4" height="9.4" viewBox="0 0 9.4 9.4" fill="none" stroke="#2e2e2e" stroke-width="0.9" stroke-linecap="round" stroke-linejoin="round"><circle cx="4.7" cy="4.7" r="4.1"/><path d="M3.6 3.8Q3.8 2.6 4.8 2.6Q5.9 2.7 5.8 3.8Q5.7 4.5 4.7 5V5.6M4.7 6.8V6.9" stroke-width="0.8"/></svg>
<div class="b" style="left:1012.4px;top:516.4px;width:22.8px;height:11px;background:#352f6e;border-radius:3.5px;"></div><span class="t" style="left:1015.8px;top:514px;font-size:8.5px;color:#5a5a96;font-weight:700;transform:scaleX(0.902);">Free</span>
</section>
<!-- timeline -->
<section id="timeline">
<div class="b" style="left:8px;top:540.6px;width:1284px;height:274.2px;background:#0e0e0e;border-radius:2px 2px 0 0;"></div>
<div class="b" style="left:8px;top:540.6px;width:1284px;height:29px;background:#0e0e0e;border-radius:2px 2px 0 0;"></div>
<div class="b" style="left:8px;top:569.6px;width:1284px;height:0.8px;background:#070707;"></div>
<svg class="i" style="left:17.6px;top:549.2px;" width="9.6" height="13" viewBox="0 0 9.6 13" fill="none" stroke="#5e5e5e" stroke-width="1.3" stroke-linecap="round" stroke-linejoin="round"><path d="M0.8 0.8V10L3.4 7.8L5.2 12L6.8 11.3L5 7.2H8.6Z"/></svg>
<svg class="i" style="left:40.2px;top:554.8px;" width="6.4" height="4.2" viewBox="0 0 6.4 4.2" fill="none" stroke="#6a6a6a" stroke-width="1.6" stroke-linecap="round" stroke-linejoin="round"><path d="M0.8 0.8L3.2 3.2L5.6 0.8"/></svg>
<div class="b" style="left:58.6px;top:548px;width:1px;height:15.4px;background:#141414;"></div>
<svg class="i" style="left:71.6px;top:549.8px;" width="11.6" height="11.6" viewBox="0 0 11.6 11.6" fill="none" stroke="#5e5e5e" stroke-width="1.2" stroke-linecap="round" stroke-linejoin="round"><path d="M3.6 0.8L0.8 3.6L3.6 6.4"/><path d="M1.2 3.6H7.4Q10.8 3.6 10.8 7Q10.8 10.6 7.4 10.6H2"/></svg>
<div class="b" style="left:99.4px;top:545.6px;width:21.2px;height:20.4px;background:#121212;border-radius:4px;"></div>
<svg class="i" style="left:104.2px;top:549.8px;" width="11.6" height="11.6" viewBox="0 0 11.6 11.6" fill="none" stroke="#262626" stroke-width="1.2" stroke-linecap="round" stroke-linejoin="round"><path d="M8 0.8L10.8 3.6L8 6.4"/><path d="M10.4 3.6H4.2Q0.8 3.6 0.8 7Q0.8 10.6 4.2 10.6H9.6"/></svg>
<svg class="i" style="left:137.6px;top:550.4px;" width="10.4" height="11" viewBox="0 0 10.4 11" fill="none" stroke="#5e5e5e" stroke-width="1.2" stroke-linecap="round" stroke-linejoin="round"><path d="M0.6 0.7H3.7V10.3H0.6M9.8 0.7H6.7V10.3H9.8"/></svg>
<svg class="i" style="left:170px;top:550.4px;" width="10.4" height="11" viewBox="0 0 10.4 11" fill="none" stroke="#5e5e5e" stroke-width="1.2" stroke-linecap="round" stroke-linejoin="round"><path d="M0.6 0.7H3.7V10.3H0.6" stroke="#2c2c2c"/><path d="M9.8 0.7H6.7V10.3H9.8"/></svg>
<svg class="i" style="left:201.8px;top:550.4px;" width="10.4" height="11" viewBox="0 0 10.4 11" fill="none" stroke="#5e5e5e" stroke-width="1.2" stroke-linecap="round" stroke-linejoin="round"><path d="M0.6 0.7H3.7V10.3H0.6"/><path d="M9.8 0.7H6.7V10.3H9.8" stroke="#2c2c2c"/></svg>
<svg class="i" style="left:234.4px;top:549.8px;" width="11.2" height="12" viewBox="0 0 11.2 12" fill="none" stroke="#5e5e5e" stroke-width="1.2" stroke-linecap="round" stroke-linejoin="round"><path d="M0.6 2.6H10.6M3.6 2.4V0.7H7.6V2.4M1.8 2.8L2.4 11.3H8.8L9.4 2.8"/></svg>
<svg class="i" style="left:267.4px;top:549.8px;" width="10" height="12" viewBox="0 0 10 12" fill="none" stroke="#5e5e5e" stroke-width="1.2" stroke-linecap="round" stroke-linejoin="round"><path d="M0.7 0.7H9.3V7.6L5 11.2L0.7 7.6Z"/></svg>
<svg class="i" style="left:299px;top:549.4px;" width="12.8" height="13" viewBox="0 0 12.8 13" fill="none" stroke="#5e5e5e" stroke-width="1.2" stroke-linecap="round" stroke-linejoin="round"><path d="M2.6 0.6V9.8H12.2M0.6 2.8H10V12.4"/><path d="M4.6 8L8 4.6" stroke-width="0.9"/></svg>
<div class="b" style="left:972px;top:545.7px;width:19px;height:20.3px;background:#080808;border-radius:3px;"></div>
<svg class="i" style="left:974px;top:548.8px;" width="13" height="14" viewBox="0 0 13 14" fill="none" stroke="#0a5a60" stroke-width="0.9" stroke-linecap="round" stroke-linejoin="round"><rect x="0.8" y="4" width="11.4" height="6" rx="1" fill="#095258" stroke="#095258"/><path d="M6.5 0.4V2.2M2.6 1.2L3.4 2.6M10.4 1.2L9.6 2.6M6.5 13.6V11.8M2.6 12.8L3.4 11.4M10.4 12.8L9.6 11.4"/></svg>
<svg class="i" style="left:1005px;top:552.2px;" width="16" height="7.6" viewBox="0 0 16 7.6" fill="none" stroke="#0a6068" stroke-width="1.9" stroke-linecap="round" stroke-linejoin="round"><rect x="0.8" y="0.8" width="6.6" height="6" rx="1.6"/><rect x="8.6" y="0.8" width="6.6" height="6" rx="1.6"/><path d="M4.6 3.8H11.4"/></svg>
<div class="b" style="left:1024.8px;top:545.7px;width:11px;height:20.3px;background:#040404;border-radius:3px;"></div>
<svg class="i" style="left:1027.2px;top:554.4px;" width="6.6" height="4.2" viewBox="0 0 6.6 4.2" fill="none" stroke="#8a8a8a" stroke-width="1.3" stroke-linecap="round" stroke-linejoin="round"><path d="M0.7 0.7L3.3 3.2L5.9 0.7"/></svg>
<svg class="i" style="left:1050px;top:550.4px;" width="16.4" height="12.4" viewBox="0 0 16.4 12.4" fill="none" stroke="#4a4a4a" stroke-width="1.1" stroke-linecap="round" stroke-linejoin="round"><path d="M5 2.2H0.6V8.6H5M11 2.2H15.4V8.6H13.6M8 0.4V10.4"/><path d="M10.4 6.4V11L11.6 10L12.4 11.8L13.2 11.4L12.4 9.8H13.8Z" fill="#4a4a4a" stroke-width="0.6"/></svg>
<svg class="i" style="left:1072.4px;top:554.6px;" width="6.6" height="4.2" viewBox="0 0 6.6 4.2" fill="none" stroke="#6a6a6a" stroke-width="1.3" stroke-linecap="round" stroke-linejoin="round"><path d="M0.7 0.7L3.3 3.2L5.9 0.7"/></svg>
<div class="b" style="left:1093px;top:543.4px;width:1px;height:13px;background:#141414;"></div>
<svg class="i" style="left:1107.6px;top:550.2px;" width="15" height="11.6" viewBox="0 0 15 11.6" fill="none" stroke="#5e5e5e" stroke-width="1.1" stroke-linecap="round" stroke-linejoin="round"><path d="M0.6 0.6H14.4V6.4H12M0.6 0.6V6.4H6"/><path d="M3.4 0.8V2.8M6.2 0.8V2.8M9 0.8V2.8M11.8 0.8V2.8" stroke-width="0.9"/><circle cx="8.8" cy="7.6" r="2.2"/><path d="M10.4 9.4L11.8 11"/></svg>
<svg class="i" style="left:1141px;top:549.4px;" width="14" height="14" viewBox="0 0 14 14" fill="none" stroke="#5e5e5e" stroke-width="1.1" stroke-linecap="round" stroke-linejoin="round"><circle cx="6.2" cy="6.2" r="5.6"/><path d="M3.6 6.2H8.8M10.4 10.6L12 12.4"/></svg>
<div class="b" style="left:1178px;top:555px;width:77.6px;height:1.4px;background:#000000;"></div>
<div class="b" style="left:1171.6px;top:550.6px;width:7.4px;height:11px;background:#5c5c5c;border-radius:2.4px;"></div>
<div class="b" style="left:1169.6px;top:554.6px;width:2.4px;height:2.2px;background:#5c5c5c;"></div>
<svg class="i" style="left:1270.8px;top:549.4px;" width="14" height="14" viewBox="0 0 14 14" fill="none" stroke="#5e5e5e" stroke-width="1.1" stroke-linecap="round" stroke-linejoin="round"><circle cx="6.2" cy="6.2" r="5.6"/><path d="M3.6 6.2H8.8M6.2 3.6V8.8M10.4 10.6L12 12.4"/></svg>
<div class="b" style="left:165px;top:571.6px;width:396px;height:0.8px;background:#20160a;"></div>
<svg class="i" style="left:0px;top:570px;" width="1292" height="16" viewBox="0 0 1292 16" fill="none"><path d="M179.55 3.6V8" stroke="#1c1c1c"/><path d="M194.1 3.6V8" stroke="#1c1c1c"/><path d="M208.64 3.6V8" stroke="#1c1c1c"/><path d="M223.19 3.6V8" stroke="#1c1c1c"/><path d="M237.74 3.6V8" stroke="#1c1c1c"/><path d="M252.29 3.6V8" stroke="#1c1c1c"/><path d="M266.84 3.6V8" stroke="#1c1c1c"/><path d="M281.38 3.6V8" stroke="#1c1c1c"/><path d="M295.93 3.6V8" stroke="#1c1c1c"/><path d="M310.48 3.6V8" stroke="#1c1c1c"/><path d="M325.03 3.6V8" stroke="#1c1c1c"/><path d="M339.58 3V13.6" stroke="#2c2c2c" stroke-width="1.2"/><path d="M354.12 3.6V8" stroke="#1c1c1c"/><path d="M368.67 3.6V8" stroke="#1c1c1c"/><path d="M383.22 3.6V8" stroke="#1c1c1c"/><path d="M397.77 3.6V8" stroke="#1c1c1c"/><path d="M412.32 3.6V8" stroke="#1c1c1c"/><path d="M426.86 3.6V8" stroke="#1c1c1c"/><path d="M441.41 3.6V8" stroke="#1c1c1c"/><path d="M455.96 3.6V8" stroke="#1c1c1c"/><path d="M470.51 3.6V8" stroke="#1c1c1c"/><path d="M485.06 3.6V8" stroke="#1c1c1c"/><path d="M499.6 3.6V8" stroke="#1c1c1c"/><path d="M514.15 3V13.6" stroke="#2c2c2c" stroke-width="1.2"/><path d="M528.7 3.6V8" stroke="#1c1c1c"/><path d="M543.25 3.6V8" stroke="#1c1c1c"/><path d="M557.8 3.6V8" stroke="#1c1c1c"/><path d="M572.34 3.6V8" stroke="#1c1c1c"/><path d="M586.89 3.6V8" stroke="#1c1c1c"/><path d="M601.44 3.6V8" stroke="#1c1c1c"/><path d="M615.99 3.6V8" stroke="#1c1c1c"/><path d="M630.54 3.6V8" stroke="#1c1c1c"/><path d="M645.08 3.6V8" stroke="#1c1c1c"/><path d="M659.63 3.6V8" stroke="#1c1c1c"/><path d="M674.18 3.6V8" stroke="#1c1c1c"/><path d="M688.73 3V13.6" stroke="#2c2c2c" stroke-width="1.2"/><path d="M703.28 3.6V8" stroke="#1c1c1c"/><path d="M717.82 3.6V8" stroke="#1c1c1c"/><path d="M732.37 3.6V8" stroke="#1c1c1c"/><path d="M746.92 3.6V8" stroke="#1c1c1c"/><path d="M761.47 3.6V8" stroke="#1c1c1c"/><path d="M776.02 3.6V8" stroke="#1c1c1c"/><path d="M790.56 3.6V8" stroke="#1c1c1c"/><path d="M805.11 3.6V8" stroke="#1c1c1c"/><path d="M819.66 3.6V8" stroke="#1c1c1c"/><path d="M834.21 3.6V8" stroke="#1c1c1c"/><path d="M848.76 3.6V8" stroke="#1c1c1c"/><path d="M863.3 3V13.6" stroke="#2c2c2c" stroke-width="1.2"/><path d="M877.85 3.6V8" stroke="#1c1c1c"/><path d="M892.4 3.6V8" stroke="#1c1c1c"/><path d="M906.95 3.6V8" stroke="#1c1c1c"/><path d="M921.5 3.6V8" stroke="#1c1c1c"/><path d="M936.04 3.6V8" stroke="#1c1c1c"/><path d="M950.59 3.6V8" stroke="#1c1c1c"/><path d="M965.14 3.6V8" stroke="#1c1c1c"/><path d="M979.69 3.6V8" stroke="#1c1c1c"/><path d="M994.24 3.6V8" stroke="#1c1c1c"/><path d="M1008.78 3.6V8" stroke="#1c1c1c"/><path d="M1023.33 3.6V8" stroke="#1c1c1c"/><path d="M1037.88 3V13.6" stroke="#2c2c2c" stroke-width="1.2"/><path d="M1052.43 3.6V8" stroke="#1c1c1c"/><path d="M1066.98 3.6V8" stroke="#1c1c1c"/><path d="M1081.52 3.6V8" stroke="#1c1c1c"/><path d="M1096.07 3.6V8" stroke="#1c1c1c"/><path d="M1110.62 3.6V8" stroke="#1c1c1c"/><path d="M1125.17 3.6V8" stroke="#1c1c1c"/><path d="M1139.72 3.6V8" stroke="#1c1c1c"/><path d="M1154.26 3.6V8" stroke="#1c1c1c"/><path d="M1168.81 3.6V8" stroke="#1c1c1c"/><path d="M1183.36 3.6V8" stroke="#1c1c1c"/><path d="M1197.91 3.6V8" stroke="#1c1c1c"/><path d="M1212.46 3V13.6" stroke="#2c2c2c" stroke-width="1.2"/><path d="M1227 3.6V8" stroke="#1c1c1c"/><path d="M1241.55 3.6V8" stroke="#1c1c1c"/><path d="M1256.1 3.6V8" stroke="#1c1c1c"/><path d="M1270.65 3.6V8" stroke="#1c1c1c"/><path d="M1285.2 3.6V8" stroke="#1c1c1c"/></svg>
<span class="t" style="left:169.6px;top:571px;font-size:9.5px;color:#2b2b2b;transform:scaleX(1.026);-webkit-text-stroke:0.18px #2b2b2b;">00:00</span>
<span class="t" style="left:1042.48px;top:571px;font-size:9.5px;color:#2b2b2b;transform:scaleX(1.026);-webkit-text-stroke:0.18px #2b2b2b;">00:50</span>
<span class="t" style="left:1217.06px;top:571px;font-size:9.5px;color:#2b2b2b;transform:scaleX(1.026);-webkit-text-stroke:0.18px #2b2b2b;">01:00</span>
<div class="b" style="left:8px;top:639.4px;width:111.4px;height:56.6px;background:#131313;"></div>
<div class="b" style="left:165.6px;top:639.4px;width:1122.4px;height:56.6px;background:#121212;"></div>
<div class="b" style="left:8px;top:699.4px;width:111.4px;height:68.6px;background:#131313;"></div>
<div class="b" style="left:165.6px;top:698.6px;width:1122.4px;height:69.4px;background:#131313;"></div>
<svg class="i" style="left:15.2px;top:662.9px;" width="11" height="9" viewBox="0 0 11 9" fill="none" stroke="#2e2e2e" stroke-width="1" stroke-linecap="round" stroke-linejoin="round"><rect x="0.5" y="0.5" width="10" height="8" rx="1"/><path d="M4.4 3L6.8 4.5L4.4 6Z" fill="#2e2e2e"/></svg><svg class="i" style="left:38.6px;top:662.7px;" width="8" height="9.4" viewBox="0 0 8 9.4" fill="none" stroke="#4a4a4a" stroke-width="1.2" stroke-linecap="round" stroke-linejoin="round"><rect x="0.7" y="4.3" width="6.6" height="4.4" rx="0.8"/><path d="M2.2 4.2V2.6Q2.2 0.7 4 0.7Q5.8 0.7 5.8 2.6V4.2M2.6 6.5H5.4"/></svg><svg class="i" style="left:59px;top:663.7px;" width="10.4" height="7.4" viewBox="0 0 10.4 7.4" fill="none" stroke="#4a4a4a" stroke-width="1" stroke-linecap="round" stroke-linejoin="round"><path d="M0.5 3.7Q5.2 -2.4 9.9 3.7Q5.2 9.8 0.5 3.7Z"/><circle cx="5.2" cy="3.7" r="1.5"/></svg><svg class="i" style="left:80.6px;top:663.3px;" width="11" height="8.4" viewBox="0 0 11 8.4" fill="none" stroke="#4a4a4a" stroke-width="1" stroke-linecap="round" stroke-linejoin="round"><path d="M0.5 2.8H2.4L5 0.6V7.8L2.4 5.6H0.5Z"/><path d="M7 2.6Q8 4.2 7 5.8M8.8 1.2Q10.8 4.2 8.8 7.2"/></svg><svg class="i" style="left:103px;top:666.4px;" width="9" height="2" viewBox="0 0 9 2" fill="none"><circle cx="1" cy="1" r="0.9" fill="#4a4a4a"/><circle cx="4.5" cy="1" r="0.9" fill="#4a4a4a"/><circle cx="8" cy="1" r="0.9" fill="#4a4a4a"/></svg>
<svg class="i" style="left:15.2px;top:728.5px;" width="11" height="9" viewBox="0 0 11 9" fill="none" stroke="#2e2e2e" stroke-width="1" stroke-linecap="round" stroke-linejoin="round"><rect x="0.5" y="0.5" width="10" height="8" rx="1"/><path d="M4.4 3L6.8 4.5L4.4 6Z" fill="#2e2e2e"/></svg><svg class="i" style="left:38.6px;top:728.3px;" width="8" height="9.4" viewBox="0 0 8 9.4" fill="none" stroke="#4a4a4a" stroke-width="1.2" stroke-linecap="round" stroke-linejoin="round"><rect x="0.7" y="4.3" width="6.6" height="4.4" rx="0.8"/><path d="M2.2 4.2V2.6Q2.2 0.7 4 0.7Q5.8 0.7 5.8 2.6V4.2M2.6 6.5H5.4"/></svg><svg class="i" style="left:59px;top:729.3px;" width="10.4" height="7.4" viewBox="0 0 10.4 7.4" fill="none" stroke="#4a4a4a" stroke-width="1" stroke-linecap="round" stroke-linejoin="round"><path d="M0.5 3.7Q5.2 -2.4 9.9 3.7Q5.2 9.8 0.5 3.7Z"/><circle cx="5.2" cy="3.7" r="1.5"/></svg><svg class="i" style="left:80.6px;top:728.9px;" width="11" height="8.4" viewBox="0 0 11 8.4" fill="none" stroke="#4a4a4a" stroke-width="1" stroke-linecap="round" stroke-linejoin="round"><path d="M0.5 2.8H2.4L5 0.6V7.8L2.4 5.6H0.5Z"/><path d="M7 2.6Q8 4.2 7 5.8M8.8 1.2Q10.8 4.2 8.8 7.2"/></svg><svg class="i" style="left:103px;top:732px;" width="9" height="2" viewBox="0 0 9 2" fill="none"><circle cx="1" cy="1" r="0.9" fill="#4a4a4a"/><circle cx="4.5" cy="1" r="0.9" fill="#4a4a4a"/><circle cx="8" cy="1" r="0.9" fill="#4a4a4a"/></svg>
<div class="b" style="left:162.4px;top:641.2px;width:400px;height:51.9px;background:#05363a;border-radius:3px;overflow:hidden;border:1px solid #4c5353;border-left:3.2px solid #5e5e5e;"><div class="b" style="left:0px;top:0px;width:400px;height:14.6px;background:#05363a;"></div><div class="b" style="left:2.4px;top:1px;width:36.6px;height:12.6px;background:#053237;border-radius:2px;"></div><span class="t" style="left:5px;top:-2.3px;font-size:9.5px;color:#5a797d;transform:scaleX(0.99);-webkit-text-stroke:0.18px #5a797d;">Applied</span><div class="b" style="left:41.4px;top:1px;width:53.8px;height:12.6px;background:#053237;border-radius:2px;"></div><span class="t" style="left:44px;top:-2.3px;font-size:9.5px;color:#5a797d;transform:scaleX(0.979);-webkit-text-stroke:0.18px #5a797d;">My avatar 2</span><div class="b" style="left:97.6px;top:1px;width:57.2px;height:12.6px;background:#053237;border-radius:2px;"></div><span class="t" style="left:100.2px;top:-2.3px;font-size:9.5px;color:#5a797d;transform:scaleX(1.036);-webkit-text-stroke:0.18px #5a797d;">00:00:22:20</span><div class="b" style="left:0px;top:14.6px;width:400px;height:22.2px;background:#0a0a0a;overflow:hidden;"><div class="b" style="left:0;top:0;width:400px;height:23px;opacity:.285"><svg class="i" style="left:-0.4px;top:-0.2px;overflow:hidden" width="45.6" height="22.6" viewBox="18 20 132 104" preserveAspectRatio="none"><use href="#avfig"/></svg><svg class="i" style="left:44.7px;top:-0.2px;overflow:hidden" width="45.6" height="22.6" viewBox="18 20 132 104" preserveAspectRatio="none"><use href="#avfig"/></svg><svg class="i" style="left:89.8px;top:-0.2px;overflow:hidden" width="45.6" height="22.6" viewBox="18 20 132 104" preserveAspectRatio="none"><use href="#avfig"/></svg><svg class="i" style="left:134.9px;top:-0.2px;overflow:hidden" width="45.6" height="22.6" viewBox="18 20 132 104" preserveAspectRatio="none"><use href="#avfig"/></svg><svg class="i" style="left:180px;top:-0.2px;overflow:hidden" width="45.6" height="22.6" viewBox="18 20 132 104" preserveAspectRatio="none"><use href="#avfig"/></svg><svg class="i" style="left:225.1px;top:-0.2px;overflow:hidden" width="45.6" height="22.6" viewBox="18 20 132 104" preserveAspectRatio="none"><use href="#avfig"/></svg><svg class="i" style="left:270.2px;top:-0.2px;overflow:hidden" width="45.6" height="22.6" viewBox="18 20 132 104" preserveAspectRatio="none"><use href="#avfig"/></svg><svg class="i" style="left:315.3px;top:-0.2px;overflow:hidden" width="45.6" height="22.6" viewBox="18 20 132 104" preserveAspectRatio="none"><use href="#avfig"/></svg><svg class="i" style="left:360.4px;top:-0.2px;overflow:hidden" width="45.6" height="22.6" viewBox="18 20 132 104" preserveAspectRatio="none"><use href="#avfig"/></svg></div></div><div class="b" style="left:0px;top:36.8px;width:400px;height:13.6px;background:#042e33;background-image:repeating-linear-gradient(90deg,rgba(12,84,88,.5) 0 1px,transparent 1px 3px,rgba(12,84,88,.3) 3px 4px,transparent 4px 7px),repeating-linear-gradient(90deg,rgba(120,30,22,.6) 0 3px,transparent 3px 5px,rgba(120,30,22,.5) 5px 6px,transparent 6px 11px,rgba(120,30,22,.6) 11px 15px,transparent 15px 23px);background-size:100% 100%,100% 2px;background-repeat:repeat,no-repeat;background-position:0 0,0 1px;"></div></div>
<div class="b" style="left:123.8px;top:716px;width:34.6px;height:34.2px;background:#191919;border-radius:4px;border:1px dashed #202020;"></div>
<svg class="i" style="left:136px;top:721.6px;" width="10.4" height="11" viewBox="0 0 10.4 11" fill="none" stroke="#666" stroke-width="1.1" stroke-linecap="round" stroke-linejoin="round"><path d="M2 6.8L6.8 1.2L8.8 3L4 8.6L1.6 9Z"/><path d="M1 10.4H9.6"/></svg>
<span class="t" style="left:128.6px;top:732px;font-size:9.5px;color:#5e5e5e;transform:scaleX(0.963);-webkit-text-stroke:0.18px #5e5e5e;">Cover</span>
<svg class="i" style="left:187px;top:727px;" width="14" height="11.4" viewBox="0 0 14 11.4" fill="none" stroke="#555" stroke-width="1.1" stroke-linecap="round" stroke-linejoin="round"><rect x="0.6" y="0.6" width="12.8" height="10.2" rx="1.2"/><path d="M3.6 0.6V10.8M10.4 0.6V10.8M3.6 5.7H10.4" /><path d="M0.8 3H3.4M0.8 5.7H3.4M0.8 8.4H3.4M10.6 3H13.2M10.6 5.7H13.2M10.6 8.4H13.2" stroke-width="0.8"/></svg>
<div class="b" style="left:164.6px;top:582px;width:1.2px;height:220px;background:#676767;"></div>
<div class="b" style="left:160.6px;top:570.8px;width:9.1px;height:12.2px;background:#0c0c0c;border-radius:2.6px;border:1.8px solid #979797;border-radius:2.8px 2.8px 4.4px 4.4px;"></div>
<div class="b" style="left:122px;top:807.6px;width:1162.6px;height:5.8px;background:#191919;border-radius:3px;"></div>
</section>
<!-- dialog -->
<section id="dialog">
<div class="b" style="left:318.6px;top:610px;width:662.6px;height:132.4px;border-radius:0 0 20px 20px;background:linear-gradient(to bottom,rgba(0,0,0,0) 0,rgba(0,0,0,.42) 50px,rgba(0,0,0,.42) 100%);filter:blur(1.3px);"></div>
<div class="b" style="left:325px;top:113px;width:650px;height:598px;background:#252525;border-radius:8px;border:1px solid #303030;"></div>
<span class="t" style="left:332.5px;top:120px;font-size:10.5px;color:#f2f2f2;transform:scaleX(1.005);-webkit-text-stroke:0.22px #f2f2f2;">Export</span>
<div class="b" style="left:326px;top:145px;width:648px;height:1px;background:#303030;"></div>
<div class="b" style="left:326px;top:661px;width:648px;height:1px;background:#333333;"></div>
<div class="b" style="left:339.6px;top:159.8px;width:287.4px;height:162.4px;background:#000000;border-radius:6px;"></div>
<svg class="i" style="left:402.2px;top:158.9px;overflow:hidden" width="162.9" height="163.3" viewBox="0 0 162 162" preserveAspectRatio="none">
<defs>
<radialGradient id="avbg" cx="50%" cy="42%" r="80%"><stop offset="0" stop-color="#fbfbf8"/><stop offset="0.65" stop-color="#f8f8f4"/><stop offset="1" stop-color="#f0f0eb"/></radialGradient>
<linearGradient id="avskirt" x1="0" y1="0" x2="1" y2="1"><stop offset="0" stop-color="#f6e6ac"/><stop offset="0.5" stop-color="#f2dc98"/><stop offset="1" stop-color="#ecd48c"/></linearGradient>
<linearGradient id="avtop" x1="0" y1="0" x2="1" y2="1"><stop offset="0" stop-color="#9ad4f4"/><stop offset="0.6" stop-color="#7cc2ec"/><stop offset="1" stop-color="#68b0e0"/></linearGradient>
<linearGradient id="avhair" x1="0" y1="0" x2="0" y2="1"><stop offset="0" stop-color="#e4bc6c"/><stop offset="0.45" stop-color="#f0d28a"/><stop offset="1" stop-color="#e8c47a"/></linearGradient>
<linearGradient id="avskin" x1="0" y1="0" x2="1" y2="0"><stop offset="0" stop-color="#f8e0d2"/><stop offset="1" stop-color="#f0c6b2"/></linearGradient>
<filter id="avblur" x="-5%" y="-5%" width="110%" height="110%"><feGaussianBlur stdDeviation="0.8"/></filter>
<filter id="avblur2" x="-5%" y="-5%" width="110%" height="110%"><feGaussianBlur stdDeviation="0.45"/></filter>
</defs>
<g id="avfig"><rect width="162" height="162" fill="url(#avbg)"/>
<g filter="url(#avblur)">
<path d="M83.5 21.6Q72 22 70.4 36Q68.6 48 67.4 58Q63 66 61 80Q57.6 98 58 116Q60 122 63.6 118Q64.6 98 69 80Q72 70 76 66L92 64Q98 66 101.6 63Q101 50 98.6 38Q96.4 22 83.5 21.6Z" fill="url(#avhair)"/>
<path d="M73 66Q84 61 94 64Q104 66 108 70.6Q110.6 75 108.6 82L72 80Q70 72 73 66Z" fill="url(#avskin)"/>
<path d="M100 74Q108.6 72 109 84Q107.6 104 108 120Q110 140 115.4 156Q117 161 113 162H106.6Q104 142 101.6 122Q98.6 98 100 74Z" fill="#f0c8b6"/>
<path d="M80 50H89.6L90.6 66Q85 69 79 66Z" fill="#f4d6c4"/>
<path d="M57.6 94Q55.6 84 57.4 76Q56 68 57.6 62Q59 57.6 62 59.6Q66 62 66.6 70Q67.6 80 65.6 88L66 96Z" fill="#f6dccc"/>
<path d="M49 162Q53 138 59.6 115.6Q78 112 98 114.6Q104 138 107.6 162Z" fill="url(#avskirt)"/>
<path d="M66.6 80L98.6 80L98.4 114Q80 118.6 61.6 114.6Q62.6 96 66.6 80Z" fill="url(#avtop)"/>
<path d="M72 72.4Q86 74.6 100.6 77L100 84.6Q84 80 68.4 80.6Z" fill="#fcfaf4"/>
<ellipse cx="84" cy="40.4" rx="8.6" ry="11.8" fill="#f8e0d2"/>
<path d="M73.6 44Q71 27 84 24.4Q97.6 26 95.4 44Q94 34 89.6 30.6Q82 28 77.4 33.6Q74.6 38 73.6 44Z" fill="#ecce86"/>
<path d="M57.4 98Q55 108 57 118Q59.6 123 62 118Q60.6 108 61.6 100Z" fill="#d9cdbc" opacity=".9"/><path d="M70 40Q67 52 66.6 62M98 40Q100 52 100.6 60M74 58Q70 66 67 76" stroke="#d6aa5c" stroke-width="1.4" fill="none" opacity=".7"/><path d="M108 150Q112 148 116 154Q117 160 114 162H108Z" fill="#f0c8b6"/>
</g>
<g filter="url(#avblur2)">
<path d="M71.4 33.6Q72 21.6 84 19.8Q95.6 21 96.2 33.4L93.6 33.4Q92.4 24.4 84 23.2Q75.4 24 74.2 33.8Z" fill="#6f9ed6"/>
<path d="M73.6 28.6L74.6 29M76.6 24.6L77.4 25.2M81 22L81.6 22.8M86.6 21.8L87 22.6M91 24L90.6 24.8M94 28L93.4 28.6" stroke="#dce8f6" stroke-width="1" stroke-linecap="round"/>
<path d="M79.6 38.4Q81 37.6 82.6 38.4M86.2 38.4Q87.6 37.6 89.2 38.4" stroke="#7a6250" stroke-width="1" fill="none"/>
<path d="M81.8 46.4Q84 47.8 86.2 46.2" stroke="#dc4a3e" stroke-width="1.5" stroke-linecap="round" fill="none"/>
<path d="M78.6 59Q84 64 91 59.6" stroke="#ece2cc" stroke-width="1" fill="none"/>
<path d="M69.6 86Q76 83 82 87Q86 84 91 86.6Q94 86 96 88M69 93Q76 90 83 94Q88 92 95 95.6" stroke="#e8f4fc" stroke-width="1.5" fill="none" opacity=".8"/>
<circle cx="67" cy="99.4" r="2.6" fill="#e25a2c"/><circle cx="93.6" cy="91.6" r="2.5" fill="#e47e34"/>
<circle cx="92" cy="137.6" r="3" fill="none" stroke="#8a7c6e" stroke-width="1.3"/><path d="M91 118V134" stroke="#e0c98a" stroke-width="0.9"/><path d="M92.6 141L94 152" stroke="#b49a7a" stroke-width="1.6" stroke-linecap="round"/>
<path d="M56.6 85Q60 87.4 64.6 86.4" stroke="#b09a88" stroke-width="1.4" fill="none"/>
</g></g></svg>
<div class="b" style="left:344.6px;top:167px;width:70.4px;height:17.6px;background:rgba(0,0,0,.36);border-radius:3px;"></div>
<svg class="i" style="left:351.4px;top:170.6px;" width="9.6" height="10.4" viewBox="0 0 9.6 10.4" fill="none" stroke="#f4f4f4" stroke-width="1.1" stroke-linecap="round" stroke-linejoin="round"><path d="M1.8 6.6L6.4 1.2L8.4 3L3.8 8.4L1.4 8.8Z"/><path d="M0.8 9.8H8.6"/></svg>
<span class="t" style="left:363.8px;top:167px;font-size:10.5px;color:#f6f6f6;-webkit-text-stroke:0.22px #f6f6f6;">Edit cover</span>
<svg class="i" style="left:340.3px;top:680px;" width="16" height="13.2" viewBox="0 0 16 13.2" fill="none" stroke="#b4b4b4" stroke-width="1.2" stroke-linecap="round" stroke-linejoin="round"><rect x="0.7" y="0.7" width="14.6" height="11.8" rx="1.4"/><path d="M3.8 0.7V12.5M12.2 0.7V12.5M3.8 6.6H12.2"/><path d="M0.9 3.2H3.6M0.9 6.6H3.6M0.9 10H3.6M12.4 3.2H15.1M12.4 6.6H15.1M12.4 10H15.1" stroke-width="0.8"/></svg>
<span class="t" style="left:361.4px;top:678px;font-size:10.5px;color:#d2d2d2;transform:scaleX(0.955);-webkit-text-stroke:0.22px #d2d2d2;">Duration: 23s | Size: about 115 MB</span>
<span class="t" style="left:650px;top:161px;font-size:10.5px;color:#cfcfcf;transform:scaleX(0.949);-webkit-text-stroke:0.22px #cfcfcf;">Name</span>
<div class="b" style="left:723px;top:159.4px;width:237.2px;height:19.8px;background:#333333;border-radius:4px;"></div>
<span class="t" style="left:650px;top:195px;font-size:10.5px;color:#cfcfcf;-webkit-text-stroke:0.22px #cfcfcf;">Export to</span>
<div class="b" style="left:723px;top:193px;width:210.4px;height:19.8px;background:#333333;border-radius:4px;"></div>
<div class="b" style="left:937.2px;top:193px;width:20px;height:19.8px;background:#3f3f3f;border-radius:4px;"></div>
<svg class="i" style="left:941px;top:198.4px;" width="12.6" height="9.4" viewBox="0 0 12.6 9.4" fill="none" stroke="#ffffff" stroke-width="1.5" stroke-linecap="round" stroke-linejoin="round"><path d="M0.9 1.8Q0.9 0.9 1.8 0.9H4.6L6 2.4H10.8Q11.7 2.4 11.7 3.3V7.6Q11.7 8.5 10.8 8.5H1.8Q0.9 8.5 0.9 7.6Z"/></svg>
<div class="b" style="left:723.1px;top:154px;width:21.7px;height:22.2px;background:#363838;"></div>
<div class="b" style="left:744.8px;top:154px;width:22.2px;height:22.2px;background:#4b4b4b;"></div>
<div class="b" style="left:767px;top:154px;width:126px;height:22.2px;background:#303030;"></div>
<div class="b" style="left:723.1px;top:176.2px;width:21.7px;height:21.7px;background:#2a2b2c;"></div>
<div class="b" style="left:744.8px;top:176.2px;width:148.2px;height:21.7px;background:#282828;"></div>
<div class="b" style="left:723.1px;top:197.9px;width:21.7px;height:20.6px;background:#383838;"></div>
<div class="b" style="left:744.8px;top:197.9px;width:43.2px;height:20.6px;background:#484848;"></div>
<div class="b" style="left:788px;top:197.9px;width:22px;height:20.6px;background:#4d4d4d;"></div>
<div class="b" style="left:810px;top:197.9px;width:43px;height:20.6px;background:#4b4b4c;"></div>
<div class="b" style="left:853px;top:197.9px;width:23px;height:20.6px;background:#505050;"></div>
<div class="b" style="left:876px;top:197.9px;width:17px;height:20.6px;background:#4b4b4b;"></div>
<div class="b" style="left:650px;top:227px;width:310.2px;height:1px;background:#333333;"></div>
<div class="b" style="left:650px;top:247px;width:11px;height:11.2px;background:#00c1cd;border-radius:3px;"></div>
<svg class="i" style="left:652px;top:249.4px;" width="7.2" height="6.4" viewBox="0 0 7.2 6.4" fill="none" stroke="#ffffff" stroke-width="1.4" stroke-linecap="round" stroke-linejoin="round"><path d="M1 3.2L2.9 5.1L6.2 1.3"/></svg>
<span class="t" style="left:668px;top:244px;font-size:10.5px;color:#e0e0e0;transform:scaleX(1.027);-webkit-text-stroke:0.22px #e0e0e0;">Video</span>
<svg class="i" style="left:698.5px;top:250.5px;" width="7.4" height="4.2" viewBox="0 0 7.4 4.2" fill="none"><polygon points="0,4.2 3.7,0 7.4,4.2" fill="#a8a8a8"/></svg>
<div class="b" style="left:953.4px;top:245px;width:5.6px;height:250.2px;background:#7b7b7b;border-radius:3px;"></div>
<span class="t" style="left:650px;top:279px;font-size:10.5px;color:#cfcfcf;transform:scaleX(0.967);-webkit-text-stroke:0.22px #cfcfcf;">Resolution</span>
<div class="b" style="left:743.8px;top:277px;width:202.4px;height:19.9px;background:#363636;border-radius:4px;"></div><span class="t" style="left:751.3px;top:279px;font-size:10.5px;color:#e4e4e4;transform:scaleX(0.989);-webkit-text-stroke:0.22px #e4e4e4;">8K</span><svg class="i" style="left:934.5px;top:285.4px;" width="6.2" height="4.2" viewBox="0 0 6.2 4.2" fill="none" stroke="#f0f0f0" stroke-width="1.6" stroke-linecap="round" stroke-linejoin="round"><path d="M0.8 0.8L3.1 3.2L5.4 0.8"/></svg>
<span class="t" style="left:650px;top:313px;font-size:10.5px;color:#cfcfcf;transform:scaleX(1.004);-webkit-text-stroke:0.22px #cfcfcf;">Bit rate</span>
<div class="b" style="left:743.8px;top:311.3px;width:202.4px;height:19.9px;background:#363636;border-radius:4px;"></div><span class="t" style="left:751.3px;top:313px;font-size:10.5px;color:#e4e4e4;transform:scaleX(0.985);-webkit-text-stroke:0.22px #e4e4e4;">Recommended</span><svg class="i" style="left:934.5px;top:319.7px;" width="6.2" height="4.2" viewBox="0 0 6.2 4.2" fill="none" stroke="#f0f0f0" stroke-width="1.6" stroke-linecap="round" stroke-linejoin="round"><path d="M0.8 0.8L3.1 3.2L5.4 0.8"/></svg>
<span class="t" style="left:650px;top:347px;font-size:10.5px;color:#cfcfcf;transform:scaleX(0.968);-webkit-text-stroke:0.22px #cfcfcf;">Codec</span>
<div class="b" style="left:743.8px;top:345.7px;width:202.4px;height:19.9px;background:#363636;border-radius:4px;"></div><span class="t" style="left:751.3px;top:347px;font-size:10.5px;color:#e4e4e4;transform:scaleX(0.894);-webkit-text-stroke:0.22px #e4e4e4;">HEVC</span><svg class="i" style="left:934.5px;top:354.1px;" width="6.2" height="4.2" viewBox="0 0 6.2 4.2" fill="none" stroke="#f0f0f0" stroke-width="1.6" stroke-linecap="round" stroke-linejoin="round"><path d="M0.8 0.8L3.1 3.2L5.4 0.8"/></svg>
<span class="t" style="left:650px;top:381px;font-size:10.5px;color:#cfcfcf;transform:scaleX(0.938);-webkit-text-stroke:0.22px #cfcfcf;">Format</span>
<div class="b" style="left:743.8px;top:380px;width:202.4px;height:19.9px;background:#363636;border-radius:4px;"></div><span class="t" style="left:751.3px;top:381px;font-size:10.5px;color:#e4e4e4;transform:scaleX(1.013);-webkit-text-stroke:0.22px #e4e4e4;">mp4</span><svg class="i" style="left:934.5px;top:388.4px;" width="6.2" height="4.2" viewBox="0 0 6.2 4.2" fill="none" stroke="#f0f0f0" stroke-width="1.6" stroke-linecap="round" stroke-linejoin="round"><path d="M0.8 0.8L3.1 3.2L5.4 0.8"/></svg>
<span class="t" style="left:650px;top:416px;font-size:10.5px;color:#cfcfcf;transform:scaleX(0.946);-webkit-text-stroke:0.22px #cfcfcf;">Frame rate</span>
<div class="b" style="left:743.8px;top:414.1px;width:202.4px;height:19.9px;background:#363636;border-radius:4px;"></div><span class="t" style="left:751.3px;top:416px;font-size:10.5px;color:#e4e4e4;transform:scaleX(1.039);-webkit-text-stroke:0.22px #e4e4e4;">24fps</span><svg class="i" style="left:934.5px;top:422.5px;" width="6.2" height="4.2" viewBox="0 0 6.2 4.2" fill="none" stroke="#f0f0f0" stroke-width="1.6" stroke-linecap="round" stroke-linejoin="round"><path d="M0.8 0.8L3.1 3.2L5.4 0.8"/></svg>
<span class="t" style="left:650px;top:450px;font-size:10.5px;color:#494949;transform:scaleX(0.978);-webkit-text-stroke:0.22px #494949;">Color space</span>
<span class="t" style="left:743.8px;top:450px;font-size:10.5px;color:#8c8c8c;transform:scaleX(1.01);-webkit-text-stroke:0.22px #8c8c8c;">Rec. 709 SDR</span>
<div class="b" style="left:650px;top:483px;width:296.2px;height:1px;background:#333333;"></div>
<div class="b" style="left:650px;top:502.8px;width:11px;height:10.8px;background:#4b4b4b;border-radius:3px;"></div>
<span class="t" style="left:664.6px;top:500px;font-size:10.5px;color:#dcdcdc;transform:scaleX(0.98);-webkit-text-stroke:0.22px #dcdcdc;">Sync exported videos to space</span>
<svg class="i" style="left:812.6px;top:503.6px;" width="9.4" height="9.4" viewBox="0 0 9.4 9.4" fill="none" stroke="#7a7a7a" stroke-width="0.9" stroke-linecap="round" stroke-linejoin="round"><circle cx="4.7" cy="4.7" r="4.1"/><path d="M3.6 3.8Q3.8 2.6 4.8 2.6Q5.9 2.7 5.8 3.8Q5.7 4.5 4.7 5V5.6M4.7 6.8V6.9" stroke-width="0.8"/></svg>
<div class="b" style="left:650px;top:532.2px;width:296.2px;height:1px;background:#333333;"></div>
<div class="b" style="left:650px;top:552px;width:11px;height:11px;background:#4b4b4b;border-radius:3px;"></div>
<span class="t" style="left:668.2px;top:549px;font-size:10.5px;color:#e0e0e0;-webkit-text-stroke:0.22px #e0e0e0;">Audio</span>
<svg class="i" style="left:698.9px;top:555.7px;" width="7.4" height="4.2" viewBox="0 0 7.4 4.2" fill="none"><polygon points="0,4.2 3.7,0 7.4,4.2" fill="#a8a8a8"/></svg>
<span class="t" style="left:650px;top:584px;font-size:10.5px;color:#3e3e3e;transform:scaleX(0.938);-webkit-text-stroke:0.22px #3e3e3e;">Format</span>
<div class="b" style="left:744.8px;top:582.6px;width:201.4px;height:18.6px;background:#2c2c2c;border-radius:4px;"></div>
<span class="t" style="left:751.3px;top:584px;font-size:10.5px;color:#464646;transform:scaleX(0.959);-webkit-text-stroke:0.22px #464646;">MP3</span>
<svg class="i" style="left:934.5px;top:590.6px;" width="6.2" height="4.2" viewBox="0 0 6.2 4.2" fill="none" stroke="#484848" stroke-width="1.6" stroke-linecap="round" stroke-linejoin="round"><path d="M0.8 0.8L3.1 3.2L5.4 0.8"/></svg>
<div class="b" style="left:650px;top:616px;width:296.2px;height:1px;background:#333333;"></div>
<div class="b" style="left:823.2px;top:673.8px;width:65.6px;height:25.6px;background:#00c1cd;border-radius:4px;"></div>
<span class="t" style="left:840.6px;top:678px;font-size:10.5px;color:#ffffff;transform:scaleX(1.008);-webkit-text-stroke:0.22px #ffffff;">Export</span>
<div class="b" style="left:895.4px;top:673.8px;width:65.2px;height:25.6px;background:#4a4a4a;border-radius:4px;"></div>
<span class="t" style="left:911.8px;top:678px;font-size:10.5px;color:#f0f0f0;transform:scaleX(0.973);-webkit-text-stroke:0.22px #f0f0f0;">Cancel</span>
</section>
<!-- annotations -->
<div class="red" style="left:1065px;top:2px;width:134px;height:30px;border-width:4px;border-radius:6px"></div>
<div class="red" style="left:627px;top:125px;width:341px;height:582px;border-width:4px;border-radius:7px"></div>
</body>
</html>
